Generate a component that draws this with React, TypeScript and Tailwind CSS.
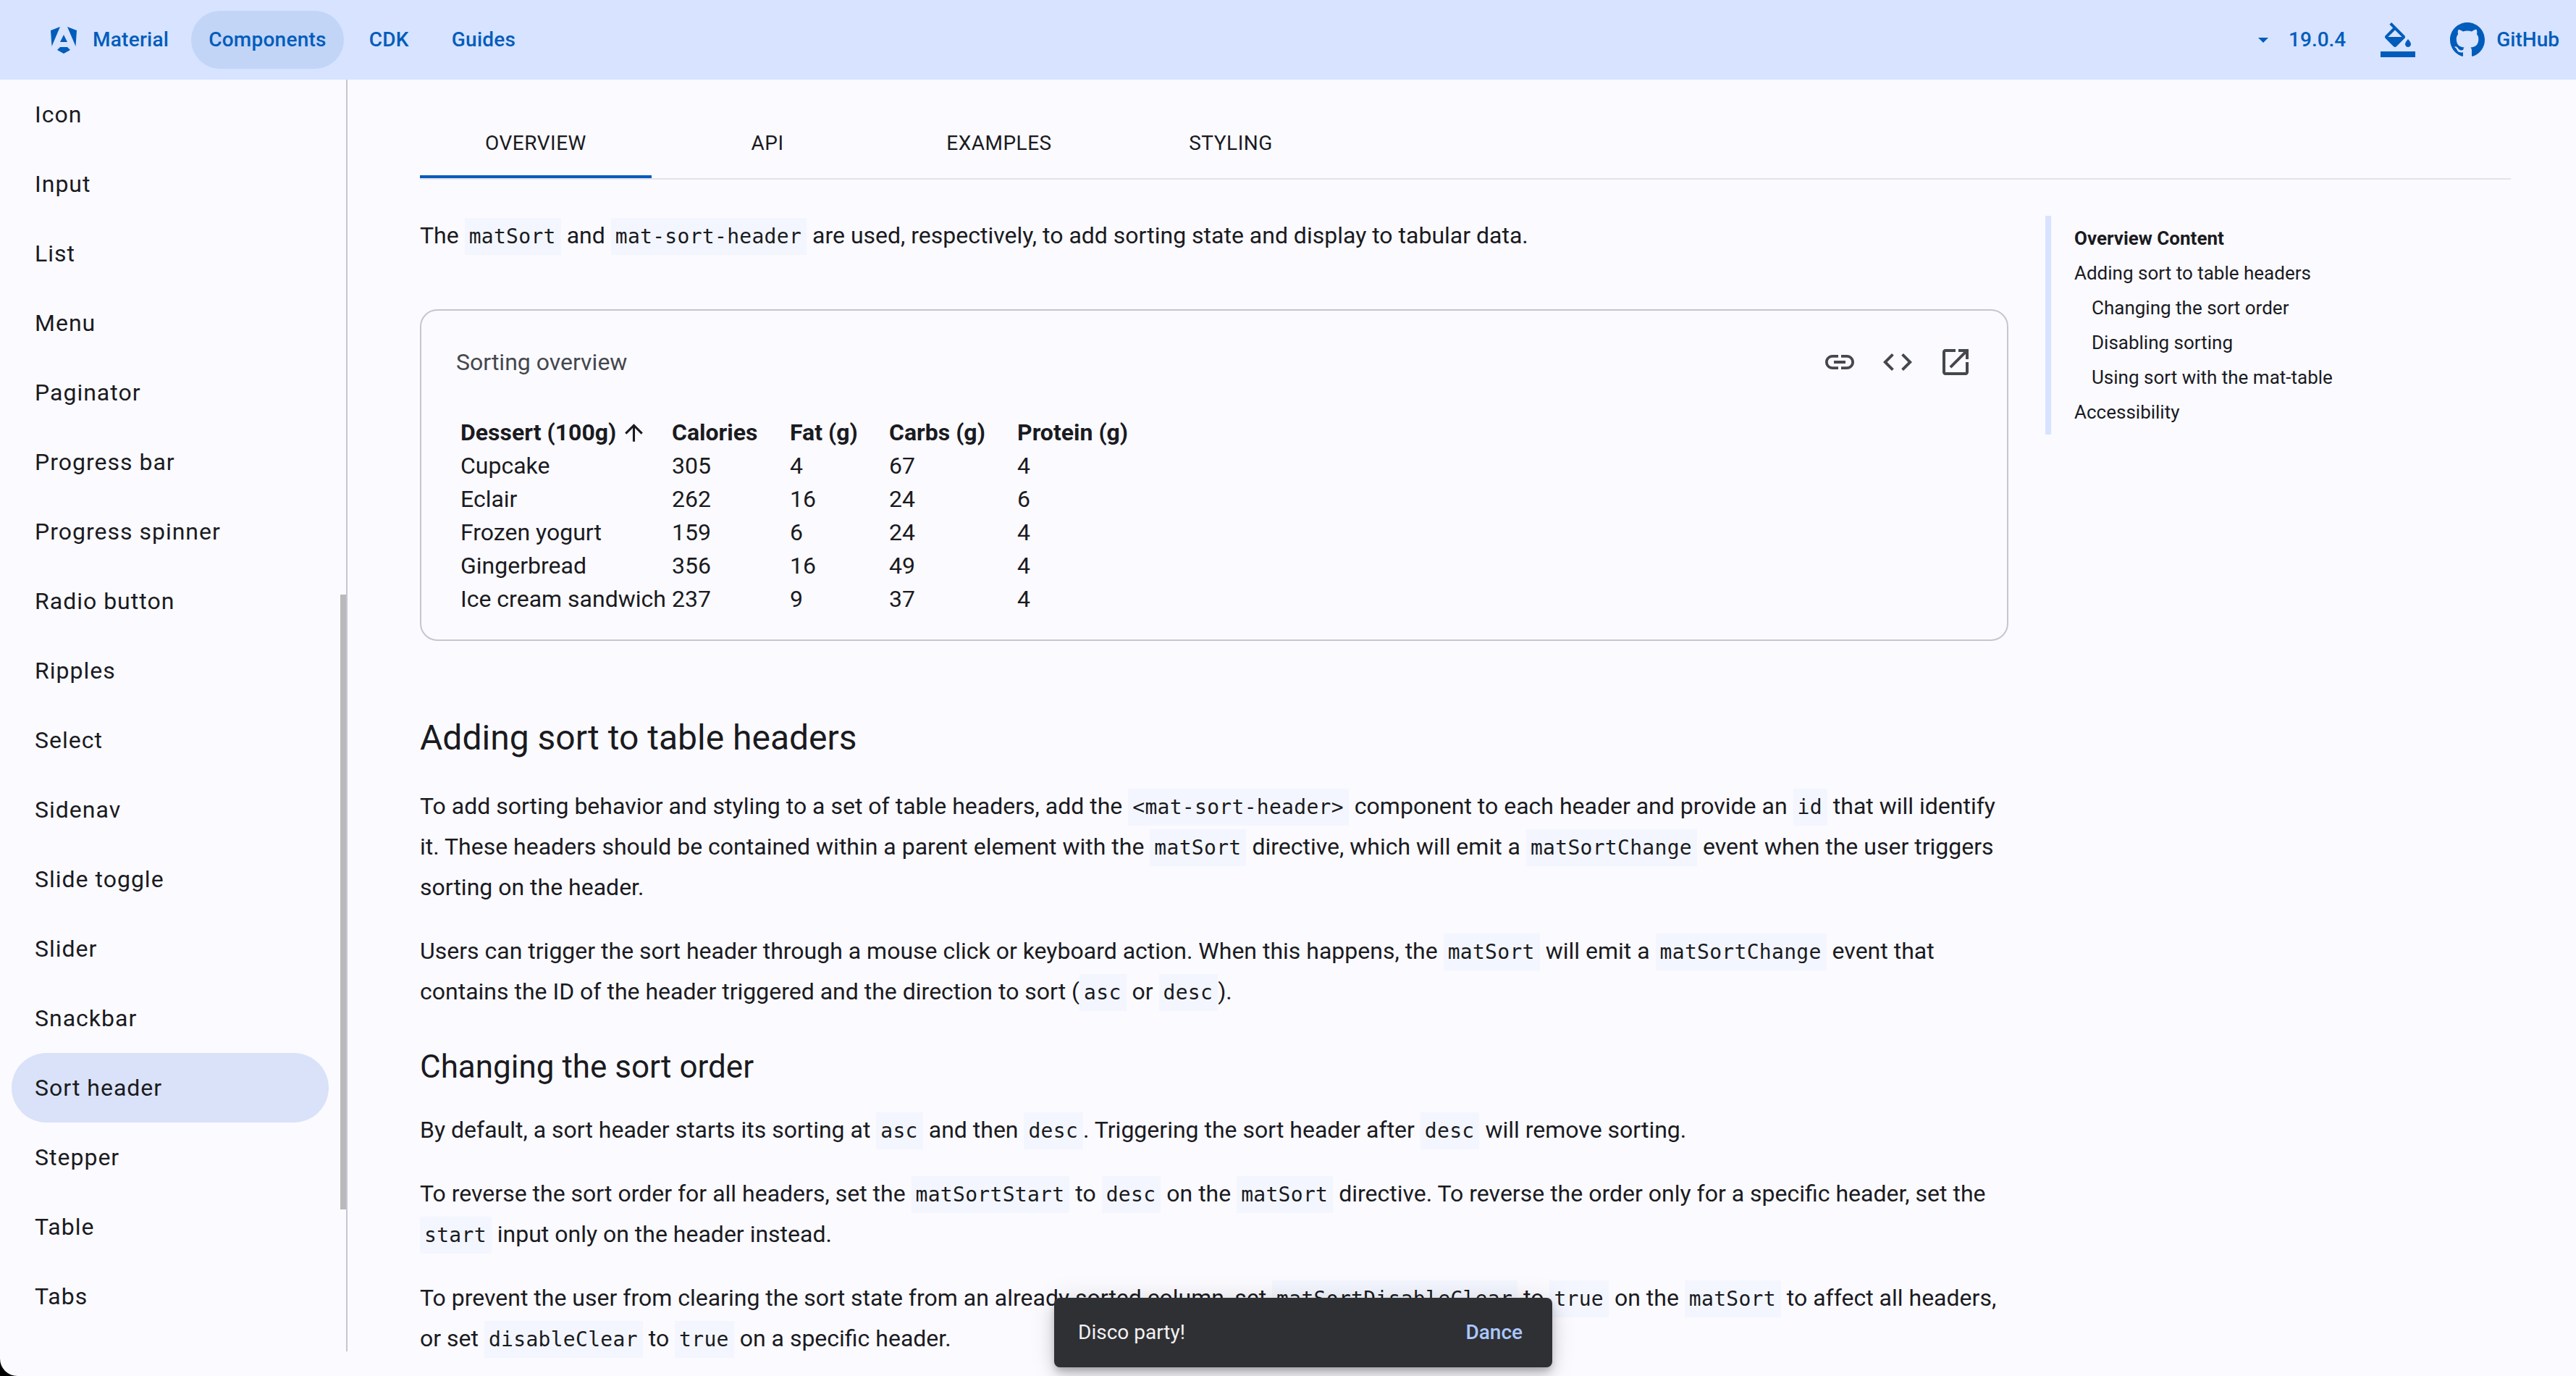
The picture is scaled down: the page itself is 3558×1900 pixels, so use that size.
import type { ReactNode } from 'react';

const sideItems = [
  'Icon', 'Input', 'List', 'Menu', 'Paginator', 'Progress bar', 'Progress spinner', 'Radio button', 'Ripples',
  'Select', 'Sidenav', 'Slide toggle', 'Slider', 'Snackbar', 'Sort header', 'Stepper', 'Table', 'Tabs',
];

const desserts = [
  ['Cupcake', '305', '4', '67', '4'],
  ['Eclair', '262', '16', '24', '6'],
  ['Frozen yogurt', '159', '6', '24', '4'],
  ['Gingerbread', '356', '16', '49', '4'],
  ['Ice cream sandwich', '237', '9', '37', '4'],
];

function Code({ children }: { children: ReactNode }) {
  return (
    <code className="bg-[#f3f6fe] py-[9px] pl-[6px] pr-[7px] font-['DejaVu_Sans_Mono',monospace] text-[28px] leading-[28px] tracking-[0.3px]">
      {children}
    </code>
  );
}

function Icon({ d, className }: { d: string; className: string }) {
  return (
    <svg viewBox="0 0 24 24" fill="currentColor" className={className}>
      <path d={d} />
    </svg>
  );
}

function AngularLogo() {
  return (
    <svg viewBox="0 0 36 37" fill="#005cbb" className="h-[37px] w-9">
      <polygon points="13,0 0,5 1.5,27" />
      <polygon points="23,0 36,5 34.5,27" />
      <polygon points="18,11 23,21 13,21" />
      <polygon points="13,28 23,28 27,32 18,37 9,32" />
    </svg>
  );
}

function Header() {
  return (
    <header className="flex h-[110px] shrink-0 items-center justify-between bg-[#d7e3ff] pl-[70px] pr-[23px] text-[28px] font-medium text-[#005cbb]">
      <nav className="flex items-center gap-[11px] tracking-[0.25px]">
        <a className="flex items-center gap-[22px] pr-5">
          <AngularLogo />
          Material
        </a>
        <a className="flex h-20 items-center rounded-[40px] bg-[#c2d5f7] px-6">Components</a>
        <a className="flex h-20 items-center rounded-[40px] px-6">CDK</a>
        <a className="flex h-20 items-center rounded-[40px] px-6">Guides</a>
      </nav>
      <div className="flex items-center">
        <svg viewBox="0 0 14 7" fill="currentColor" className="mr-7 h-[7px] w-3.5">
          <path d="M0 0h14L7 7z" />
        </svg>
        <span className="mr-12">19.0.4</span>
        <svg viewBox="0 0 24 24" fill="currentColor" className="mr-12 h-12 w-12">
          <path d="M16.56 8.94L7.62 0 6.21 1.41l2.38 2.38-5.15 5.15c-.59.59-.59 1.54 0 2.12l5.5 5.5c.29.29.68.44 1.06.44s.77-.15 1.06-.44l5.5-5.5c.59-.58.59-1.53 0-2.12zM5.21 10L10 5.21 14.79 10H5.21zM19 11.5s-2 2.17-2 3.5c0 1.1.9 2 2 2s2-.9 2-2c0-1.33-2-3.5-2-3.5z" />
          <path d="M0 20h24v4H0z" />
        </svg>
        <svg viewBox="0 0 16 16" fill="currentColor" className="mr-4 h-12 w-12">
          <path d="M8 0C3.58 0 0 3.58 0 8c0 3.54 2.29 6.53 5.47 7.59.4.07.55-.17.55-.38 0-.19-.01-.82-.01-1.49-2.01.37-2.53-.49-2.69-.94-.09-.23-.48-.94-.82-1.13-.28-.15-.68-.52-.01-.53.63-.01 1.08.58 1.23.82.72 1.21 1.87.87 2.33.66.07-.52.28-.87.51-1.07-1.78-.2-3.64-.89-3.64-3.95 0-.87.31-1.59.82-2.15-.08-.2-.36-1.02.08-2.12 0 0 .67-.21 2.2.82.64-.18 1.32-.27 2-.27.68 0 1.36.09 2 .27 1.53-1.04 2.2-.82 2.2-.82.44 1.1.16 1.92.08 2.12.51.56.82 1.27.82 2.15 0 3.07-1.87 3.75-3.65 3.95.29.25.54.73.54 1.48 0 1.07-.01 1.93-.01 2.2 0 .21.15.46.55.38A8.013 8.013 0 0016 8c0-4.42-3.58-8-8-8z" />
        </svg>
        <span>GitHub</span>
      </div>
    </header>
  );
}

function Sidebar() {
  return (
    <aside className="relative h-[1756px] w-[480px] shrink-0 overflow-hidden border-r-2 border-[#c4c6d0] pl-4 pr-6">
      {sideItems.map((item) => (
        <a
          key={item}
          className={
            item === 'Sort header'
              ? 'flex h-24 items-center rounded-[48px] bg-[#dae2f9] pl-8 text-[32px] tracking-[1px]'
              : 'flex h-24 items-center pl-8 text-[32px] tracking-[1px]'
          }
        >
          {item}
        </a>
      ))}
      {/* scrollbar thumb */}
      <div className="absolute right-0 top-[711px] h-[849px] w-2 bg-[#b9b9bb]" />
    </aside>
  );
}

function Tabs() {
  const tabs = ['OVERVIEW', 'API', 'EXAMPLES', 'STYLING'];
  return (
    <div className="flex border-b-2 border-[#e3e3e8]">
      {tabs.map((tab, i) => (
        <div
          key={tab}
          className={
            i === 0
              ? 'flex h-24 w-80 items-center justify-center border-b-4 border-[#005cbb] pt-1 text-[28px] tracking-[0.5px]'
              : 'flex h-24 w-80 items-center justify-center text-[28px] tracking-[0.5px]'
          }
        >
          {tab}
        </div>
      ))}
    </div>
  );
}

function ExampleCard() {
  return (
    <section className="mt-[74px] h-[458px] rounded-3xl border-2 border-[#c4c6d0] pb-[33px] pl-12 pr-[31px] pt-[31px]">
      <div className="flex h-20 items-center justify-between text-[#44474e]">
        <span className="text-[32px]">Sorting overview</span>
        <div className="flex">
          <button className="flex h-20 w-20 items-center justify-center">
            <Icon className="h-12 w-12" d="M3.9 12c0-1.71 1.39-3.1 3.1-3.1h4V7H7c-2.76 0-5 2.24-5 5s2.24 5 5 5h4v-1.9H7c-1.71 0-3.1-1.39-3.1-3.1zM8 13h8v-2H8v2zm9-6h-4v1.9h4c1.71 0 3.1 1.39 3.1 3.1s-1.39 3.1-3.1 3.1h-4V17h4c2.76 0 5-2.24 5-5s-2.24-5-5-5z" />
          </button>
          <button className="flex h-20 w-20 items-center justify-center">
            <Icon className="h-12 w-12" d="M9.4 16.6L4.8 12l4.6-4.6L8 6l-6 6 6 6 1.4-1.4zm5.2 0l4.6-4.6-4.6-4.6L16 6l6 6-6 6-1.4-1.4z" />
          </button>
          <button className="flex h-20 w-20 items-center justify-center">
            <Icon className="h-12 w-12" d="M19 19H5V5h7V3H5c-1.11 0-2 .9-2 2v14c0 1.1.89 2 2 2h14c1.1 0 2-.9 2-2v-7h-2v7zM14 3v2h3.59l-9.83 9.83 1.41 1.41L19 6.41V10h2V3h-7z" />
          </button>
        </div>
      </div>
      <table className="ml-1.5 mt-[34px] w-[940px] table-fixed text-left text-[32px] leading-[46px]">
        <colgroup>
          <col className="w-[292px]" />
          <col className="w-[163px]" />
          <col className="w-[137px]" />
          <col className="w-[177px]" />
          <col className="w-[171px]" />
        </colgroup>
        <thead>
          <tr className="font-bold">
            <th className="whitespace-nowrap">
              <span className="flex items-center">
                Dessert (100g)
                <svg viewBox="0 0 24 24" fill="currentColor" className="ml-1.5 h-[37px] w-[37px]">
                  <path d="M4 12l1.41 1.41L11 7.83V20h2V7.83l5.58 5.59L20 12l-8-8-8 8z" />
                </svg>
              </span>
            </th>
            <th>Calories</th>
            <th>Fat (g)</th>
            <th>Carbs (g)</th>
            <th>Protein (g)</th>
          </tr>
        </thead>
        <tbody>
          {desserts.map((row) => (
            <tr key={row[0]}>
              {row.map((cell, i) => (
                <td key={i} className="whitespace-nowrap">
                  {cell}
                </td>
              ))}
            </tr>
          ))}
        </tbody>
      </table>
    </section>
  );
}

function Article() {
  return (
    <article className="w-[2194px] shrink-0 text-[32px] leading-[56px]">
      <p className="mt-[49px]">
        The <Code>matSort</Code> and <Code>mat-sort-header</Code> are used, respectively, to add sorting state and display to tabular data.
      </p>
      <ExampleCard />
      <h2 className="mb-[38px] mt-[106px] text-[48px] leading-[56px]">Adding sort to table headers</h2>
      <p className="mb-8">
        To add sorting behavior and styling to a set of table headers, add the <Code>{'<mat-sort-header>'}</Code> component to each header and provide an <Code>id</Code> that will identify it. These headers should be contained within a parent element with the <Code>matSort</Code> directive, which will emit a <Code>matSortChange</Code> event when the user triggers sorting on the header.
      </p>
      <p className="mb-8">
        Users can trigger the sort header through a mouse click or keyboard action. When this happens, the <Code>matSort</Code> will emit a <Code>matSortChange</Code> event that contains the ID of the header triggered and the direction to sort (<Code>asc</Code> or <Code>desc</Code>).
      </p>
      <h3 className="mb-[35px] mt-[52px] text-[44px] leading-[48px]">Changing the sort order</h3>
      <p className="mb-8">
        By default, a sort header starts its sorting at <Code>asc</Code> and then <Code>desc</Code>. Triggering the sort header after <Code>desc</Code> will remove sorting.
      </p>
      <p className="mb-8">
        To reverse the sort order for all headers, set the <Code>matSortStart</Code> to <Code>desc</Code> on the <Code>matSort</Code> directive. To reverse the order only for a specific header, set the <Code>start</Code> input only on the header instead.
      </p>
      <p>
        To prevent the user from clearing the sort state from an already sorted column, set <Code>matSortDisableClear</Code> to <Code>true</Code> on the <Code>matSort</Code> to affect all headers, or set <Code>disableClear</Code> to <Code>true</Code> on a specific header.
      </p>
    </article>
  );
}

function Toc() {
  return (
    <nav className="mt-[50px] h-[302px] w-[440px] border-l-8 border-[#d7e3ff] py-[7px] pl-8 text-[26px] leading-[48px]">
      <div className="font-bold">Overview Content</div>
      <div>Adding sort to table headers</div>
      <div className="pl-6">Changing the sort order</div>
      <div className="pl-6">Disabling sorting</div>
      <div className="pl-6">Using sort with the mat-table</div>
      <div>Accessibility</div>
    </nav>
  );
}

export default function App() {
  return (
    <div className="h-[1900px] w-[3558px] overflow-hidden bg-black">
      <div className="relative flex h-full flex-col overflow-hidden rounded-bl-[24px] bg-[#fbfaff] font-['Roboto',sans-serif] text-[#1a1b1f]">
        <Header />
        <div className="flex">
          <Sidebar />
          <main className="ml-[100px] mt-10 w-[2888px]">
            <Tabs />
            <div className="flex gap-[51px]">
              <Article />
              <Toc />
            </div>
          </main>
        </div>
        <div className="absolute left-[1456px] top-[1792px] flex h-24 w-[688px] items-center justify-between rounded-lg bg-[#2f3033] pl-[33px] pr-[41px] text-[28px] text-[#f2f0f4] shadow-[0_6px_10px_-2px_rgba(0,0,0,0.2),0_12px_20px_rgba(0,0,0,0.14),0_2px_36px_rgba(0,0,0,0.12)]">
          <span>Disco party!</span>
          <span className="font-medium text-[#abc7ff]">Dance</span>
        </div>
      </div>
    </div>
  );
}
